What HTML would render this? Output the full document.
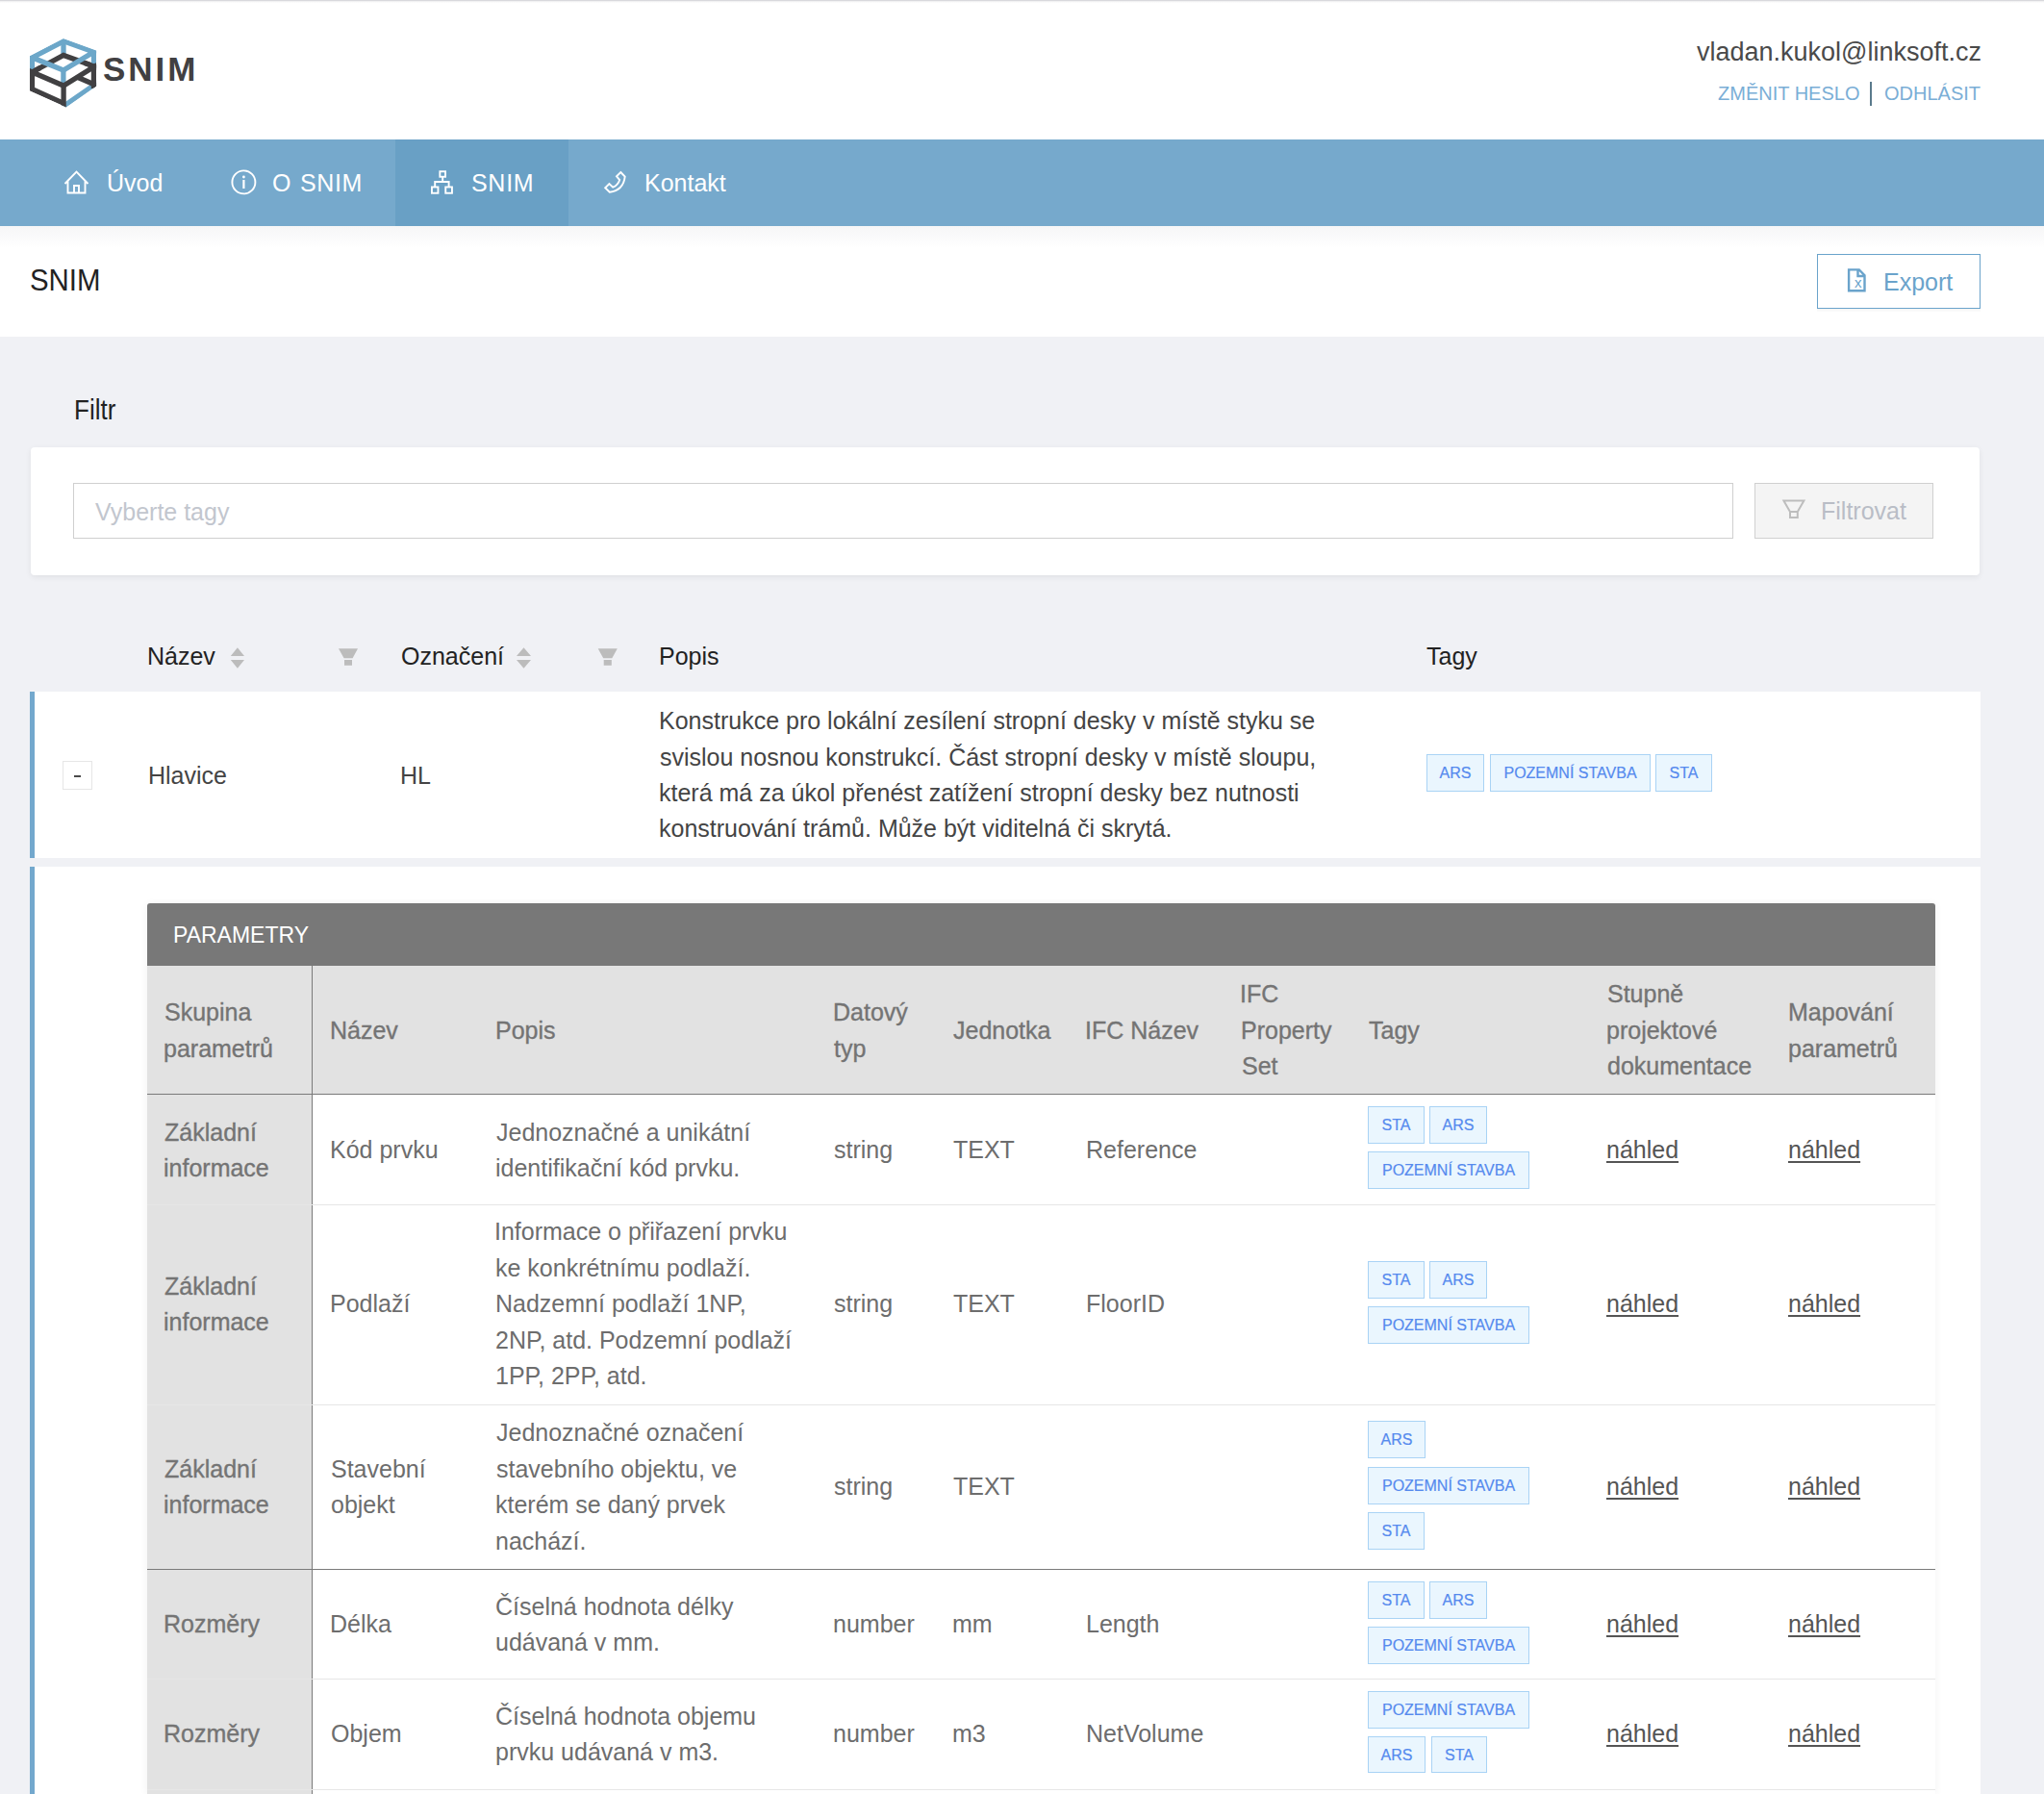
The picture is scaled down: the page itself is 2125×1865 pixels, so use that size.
<!DOCTYPE html>
<html><head><meta charset="utf-8"><style>
*{box-sizing:border-box;margin:0;padding:0}
html,body{width:2125px;height:1865px;overflow:hidden}
body{background:#f0f1f5;font-family:"Liberation Sans",sans-serif;position:relative}
.t{position:absolute;white-space:nowrap}
.r{position:absolute}
svg{position:absolute;overflow:visible}
.tag{position:absolute;background:#eaf6fe;border:1px solid #a9d3f5;color:#558aee;font-size:16px;-webkit-text-stroke:0.2px #558aee;display:flex;align-items:center;justify-content:center;white-space:nowrap;padding-top:1px}
</style></head><body>
<div class="r" style="left:0px;top:0px;width:2125px;height:145px;background:#fff"></div>
<div class="r" style="left:0px;top:0px;width:2125px;height:1px;background:#d8d8dc"></div>
<div class="r" style="left:0px;top:1px;width:2125px;height:2px;background:linear-gradient(#ececee,#fff)"></div>
<svg style="left:0;top:0" width="220" height="130" viewBox="0 0 220 130">
<defs><clipPath id="lc"><path d="M31,58.1 L65.9,40 L100.1,52.4 L100.1,89.4 L68.9,111.6 L31,94.6 Z"/></clipPath></defs>
<g clip-path="url(#lc)" fill="none" stroke-linejoin="miter" stroke-miterlimit="10">
<path d="M66,42.8 L66,58" stroke="#6ca7c9" stroke-width="5.3"/>
<path d="M33.45,75.04 L66,57.46 L97.45,68.8" stroke="#414042" stroke-width="5.3"/>
<g stroke="#6ca7c9" stroke-width="5.3">
<path d="M33.45,59.8 L66.1,42.8 L97.5,54 L65.9,73 Z"/>
<path d="M33.45,59.8 L33.45,76 M97.5,54 L97.5,70 M65.9,73 L65.9,89"/>
<path d="M104,84.1 L64,111.9"/>
</g>
<g stroke="#414042" stroke-width="5.3">
<path d="M88,65.6 L102,70.6 M29,77.2 L42,70.4"/>
<path d="M65.9,89 L33.45,75.04 L33.45,92.66 L66.1,107.4"/>
<path d="M65.9,89.2 L91.6,73.3 L101,67.5"/>
<path d="M97.45,68 L97.45,92"/>
<path d="M80.5,80.2 L102,89.6"/>
<path d="M66.1,88 L66.1,113"/>
</g>
</g></svg>
<div class="t" style="left:107px;top:54px;font-size:35px;line-height:35px;font-weight:bold;color:#414042;letter-spacing:3px">SNIM</div>
<div class="t" style="right:65px;top:41px;font-size:27px;line-height:27px;color:#4a4a4a">vladan.kukol@linksoft.cz</div>
<div class="t" style="left:1786px;top:87px;font-size:20px;line-height:20px;color:#7aaed6;">ZMĚNIT HESLO</div>
<div class="r" style="left:1944px;top:85px;width:2px;height:25px;background:#5a7a8c"></div>
<div class="t" style="left:1959px;top:87px;font-size:20px;line-height:20px;color:#7aaed6;">ODHLÁSIT</div>
<div class="r" style="left:0px;top:145px;width:2125px;height:90px;background:#76a9cc"></div>
<div class="r" style="left:411px;top:145px;width:180px;height:90px;background:#69a0c5"></div>
<svg style="left:0;top:0" width="700" height="240">
<g fill="none" stroke="#fff" stroke-width="1.9" stroke-linejoin="miter">
<path d="M67.5,191 L79.5,178.5 L91.5,191 M70.5,188.5 L70.5,200.5 L88.5,200.5 L88.5,188.5 M77,200.5 L77,193 L82,193 L82,200.5"/>
<circle cx="253.4" cy="189.4" r="12"/>
<path d="M253.4,187 L253.4,196" stroke-width="2.2"/>
<rect x="457.35" y="178.25" width="5.7" height="5.5"/>
<path d="M460.2,184 L460.2,189 M452.2,194.5 L452.2,189 L466.6,189 L466.6,194.5"/>
<rect x="448.95" y="194.45" width="6.5" height="6.3"/>
<rect x="463.25" y="194.45" width="6.7" height="6.3"/>
<path d="M645.3,179 L649.7,183.6 Q648,198 633.75,199.7 L629.2,195.3 L633.4,191.1 L637.2,194.7 Q642.5,192.5 644.2,187 L641,183.4 Z"/>
</g>
<circle cx="253.4" cy="184" r="1.4" fill="#fff"/>
</svg>
<div class="t" style="left:111px;top:178px;font-size:25px;line-height:25px;color:#fff;">Úvod</div>
<div class="t" style="left:283px;top:178px;font-size:25px;line-height:25px;color:#fff;letter-spacing:0.6px;word-spacing:1.5px">O SNIM</div>
<div class="t" style="left:490px;top:178px;font-size:25px;line-height:25px;color:#fff;letter-spacing:0.7px">SNIM</div>
<div class="t" style="left:670px;top:178px;font-size:25px;line-height:25px;color:#fff;">Kontakt</div>
<div class="r" style="left:0px;top:235px;width:2125px;height:115px;background:#fff"></div>
<div class="r" style="left:0px;top:235px;width:2125px;height:23px;background:linear-gradient(#f6f6f7,#fff)"></div>
<div class="t" style="left:31px;top:277px;font-size:30px;line-height:30px;color:#222;transform:scale(0.98,1.07);transform-origin:0 25px">SNIM</div>
<div class="r" style="left:1889px;top:320px;width:170px;height:5px;background:linear-gradient(rgba(0,0,0,.06),rgba(0,0,0,0))"></div>
<div class="r" style="left:1889px;top:264px;width:170px;height:57px;background:#fff;border:1.5px solid #6aa3cb"></div>
<svg style="left:0;top:0" width="2125" height="400">
<g fill="none" stroke="#6aa3cb" stroke-width="2.2">
<path d="M1922.1,280.4 L1932.8,280.4 L1938.5,286.2 L1938.5,302.3 L1922.1,302.3 Z M1931.5,280.4 L1931.5,287 L1938.5,287" stroke-width="2.4"/>
</g></svg>
<div class="t" style="left:1928px;top:286px;font-size:15px;line-height:15px;color:#6aa3cb;">x</div>
<div class="t" style="left:1958px;top:281px;font-size:25px;line-height:25px;color:#6aa3cb;">Export</div>
<div class="t" style="left:77px;top:414px;font-size:26px;line-height:26px;color:#222;transform:scale(1,1.12);transform-origin:0 22px">Filtr</div>
<div class="r" style="left:32px;top:465px;width:2026px;height:133px;background:#fff;border-radius:4px;box-shadow:0 2px 6px rgba(0,0,0,.07)"></div>
<div class="r" style="left:76px;top:502px;width:1726px;height:58px;background:#fff;border:1px solid #cfcfcf"></div>
<div class="t" style="left:99px;top:520px;font-size:25px;line-height:25px;color:#c2c6ce;">Vyberte tagy</div>
<div class="r" style="left:1824px;top:502px;width:186px;height:58px;background:#f4f4f4;border:1px solid #d0d0d0"></div>
<svg style="left:0;top:0" width="2125" height="600">
<path d="M1854.4,520.5 L1875.4,520.5 L1868.8,532 L1861,532 Z M1861,532 L1861,538 L1868.8,538 L1868.8,532" fill="none" stroke="#bdbdbd" stroke-width="2"/>
</svg>
<div class="t" style="left:1893px;top:519px;font-size:25px;line-height:25px;color:#b9bdc6;">Filtrovat</div>
<div class="t" style="left:153px;top:670px;font-size:25px;line-height:25px;color:#222;">Název</div>
<div class="t" style="left:417px;top:670px;font-size:25px;line-height:25px;color:#222;">Označení</div>
<div class="t" style="left:685px;top:670px;font-size:25px;line-height:25px;color:#222;">Popis</div>
<div class="t" style="left:1483px;top:670px;font-size:25px;line-height:25px;color:#222;">Tagy</div>
<svg style="left:0;top:0" width="2125" height="720"><g fill="#bcbcbc">
<path d="M239.8,682 L246.9,673.2 L254,682 Z M239.8,686 L254,686 L246.9,694.7 Z"/>
<path d="M537,682 L544.5,673.2 L552,682 Z M537,686 L552,686 L544.5,694.7 Z"/>
<path d="M352,674.2 L372,674.2 L366.6,684.2 L357.6,684.2 Z M358,686.1 L366,686.1 L366,691.8 L358,691.8 Z"/>
<path d="M621.7,674.2 L641.8,674.2 L636.3,684.2 L627.2,684.2 Z M627.7,686.1 L635.8,686.1 L635.8,691.8 L627.7,691.8 Z"/>
</g></svg>
<div class="r" style="left:31px;top:719px;width:2028px;height:173px;background:#fff"></div>
<div class="r" style="left:31px;top:719px;width:5px;height:173px;background:#73a8cd"></div>
<div class="r" style="left:65px;top:791px;width:31px;height:30px;background:#fff;border:1px solid #e6e6e6"></div>
<div class="r" style="left:77px;top:806px;width:7px;height:2px;background:#4a4a4a"></div>
<div class="t" style="left:154px;top:794px;font-size:25px;line-height:25px;color:#444;">Hlavice</div>
<div class="t" style="left:416px;top:794px;font-size:25px;line-height:25px;color:#444;">HL</div>
<div class="t" style="left:685px;top:737px;font-size:25px;line-height:25px;color:#444;">Konstrukce pro lokální zesílení stropní desky v místě styku se</div>
<div class="t" style="left:686px;top:775px;font-size:25px;line-height:25px;color:#444;">svislou nosnou konstrukcí. Část stropní desky v místě sloupu,</div>
<div class="t" style="left:685px;top:812px;font-size:25px;line-height:25px;color:#444;">která má za úkol přenést zatížení stropní desky bez nutnosti</div>
<div class="t" style="left:685px;top:849px;font-size:25px;line-height:25px;color:#444;">konstruování trámů. Může být viditelná či skrytá.</div>
<div class="tag" style="left:1483px;top:784px;width:60px;height:39px">ARS</div>
<div class="tag" style="left:1549px;top:784px;width:167px;height:39px">POZEMNÍ STAVBA</div>
<div class="tag" style="left:1721px;top:784px;width:59px;height:39px">STA</div>
<div class="r" style="left:31px;top:901px;width:2028px;height:964px;background:#fff"></div>
<div class="r" style="left:31px;top:901px;width:5px;height:964px;background:#73a8cd"></div>
<div class="r" style="left:153px;top:939px;width:1859px;height:926px;background:#fff;box-shadow:0 1px 8px rgba(0,0,0,.06);border-radius:3px 3px 0 0"></div>
<div class="r" style="left:153px;top:939px;width:1859px;height:65px;background:#787878;border-radius:3px 3px 0 0"></div>
<div class="t" style="left:180px;top:961px;font-size:23px;line-height:23px;color:#fff;">PARAMETRY</div>
<div class="r" style="left:153px;top:1004px;width:1859px;height:133px;background:#e2e2e2"></div>
<div class="r" style="left:153px;top:1137px;width:1859px;height:1px;background:#7a7a7a"></div>
<div class="r" style="left:153px;top:1138px;width:171px;height:727px;background:#e2e2e2"></div>
<div class="r" style="left:324px;top:1004px;width:1px;height:861px;background:#7a7a7a"></div>
<div class="r" style="left:153px;top:1252px;width:1859px;height:1px;background:#e6e6e6"></div>
<div class="r" style="left:153px;top:1460px;width:1859px;height:1px;background:#e6e6e6"></div>
<div class="r" style="left:153px;top:1631px;width:1859px;height:1px;background:#7a7a7a"></div>
<div class="r" style="left:153px;top:1745px;width:1859px;height:1px;background:#e6e6e6"></div>
<div class="r" style="left:153px;top:1860px;width:1859px;height:1px;background:#e6e6e6"></div>
<div class="t" style="left:171px;top:1040px;font-size:25px;line-height:25px;color:#747474;-webkit-text-stroke:0.35px #747474">Skupina</div>
<div class="t" style="left:170px;top:1078px;font-size:25px;line-height:25px;color:#747474;-webkit-text-stroke:0.35px #747474">parametrů</div>
<div class="t" style="left:343px;top:1059px;font-size:25px;line-height:25px;color:#747474;-webkit-text-stroke:0.35px #747474">Název</div>
<div class="t" style="left:515px;top:1059px;font-size:25px;line-height:25px;color:#747474;-webkit-text-stroke:0.35px #747474">Popis</div>
<div class="t" style="left:866px;top:1040px;font-size:25px;line-height:25px;color:#747474;-webkit-text-stroke:0.35px #747474">Datový</div>
<div class="t" style="left:867px;top:1078px;font-size:25px;line-height:25px;color:#747474;-webkit-text-stroke:0.35px #747474">typ</div>
<div class="t" style="left:991px;top:1059px;font-size:25px;line-height:25px;color:#747474;-webkit-text-stroke:0.35px #747474">Jednotka</div>
<div class="t" style="left:1128px;top:1059px;font-size:25px;line-height:25px;color:#747474;-webkit-text-stroke:0.35px #747474">IFC Název</div>
<div class="t" style="left:1289px;top:1021px;font-size:25px;line-height:25px;color:#747474;-webkit-text-stroke:0.35px #747474">IFC</div>
<div class="t" style="left:1290px;top:1059px;font-size:25px;line-height:25px;color:#747474;-webkit-text-stroke:0.35px #747474">Property</div>
<div class="t" style="left:1291px;top:1096px;font-size:25px;line-height:25px;color:#747474;-webkit-text-stroke:0.35px #747474">Set</div>
<div class="t" style="left:1423px;top:1059px;font-size:25px;line-height:25px;color:#747474;-webkit-text-stroke:0.35px #747474">Tagy</div>
<div class="t" style="left:1671px;top:1021px;font-size:25px;line-height:25px;color:#747474;-webkit-text-stroke:0.35px #747474">Stupně</div>
<div class="t" style="left:1670px;top:1059px;font-size:25px;line-height:25px;color:#747474;-webkit-text-stroke:0.35px #747474">projektové</div>
<div class="t" style="left:1671px;top:1096px;font-size:25px;line-height:25px;color:#747474;-webkit-text-stroke:0.35px #747474">dokumentace</div>
<div class="t" style="left:1859px;top:1040px;font-size:25px;line-height:25px;color:#747474;-webkit-text-stroke:0.35px #747474">Mapování</div>
<div class="t" style="left:1859px;top:1078px;font-size:25px;line-height:25px;color:#747474;-webkit-text-stroke:0.35px #747474">parametrů</div>
<div class="t" style="left:171px;top:1165px;font-size:25px;line-height:25px;color:#747474;-webkit-text-stroke:0.35px #747474">Základní</div>
<div class="t" style="left:170px;top:1202px;font-size:25px;line-height:25px;color:#747474;-webkit-text-stroke:0.35px #747474">informace</div>
<div class="t" style="left:343px;top:1183px;font-size:25px;line-height:25px;color:#6d6d6d;">Kód prvku</div>
<div class="t" style="left:516px;top:1165px;font-size:25px;line-height:25px;color:#6d6d6d;">Jednoznačné a unikátní</div>
<div class="t" style="left:515px;top:1202px;font-size:25px;line-height:25px;color:#6d6d6d;">identifikační kód prvku.</div>
<div class="t" style="left:867px;top:1183px;font-size:25px;line-height:25px;color:#6d6d6d;">string</div>
<div class="t" style="left:991px;top:1183px;font-size:25px;line-height:25px;color:#6d6d6d;">TEXT</div>
<div class="t" style="left:1129px;top:1183px;font-size:25px;line-height:25px;color:#6d6d6d;">Reference</div>
<div class="tag" style="left:1422px;top:1150px;width:59px;height:39px">STA</div>
<div class="tag" style="left:1486px;top:1150px;width:60px;height:39px">ARS</div>
<div class="tag" style="left:1422px;top:1197px;width:168px;height:39px">POZEMNÍ STAVBA</div>
<div class="t" style="left:1670px;top:1183px;font-size:25px;line-height:25px;color:#555;text-decoration:underline;text-underline-offset:3px">náhled</div>
<div class="t" style="left:1859px;top:1183px;font-size:25px;line-height:25px;color:#555;text-decoration:underline;text-underline-offset:3px">náhled</div>
<div class="t" style="left:171px;top:1325px;font-size:25px;line-height:25px;color:#747474;-webkit-text-stroke:0.35px #747474">Základní</div>
<div class="t" style="left:170px;top:1362px;font-size:25px;line-height:25px;color:#747474;-webkit-text-stroke:0.35px #747474">informace</div>
<div class="t" style="left:343px;top:1343px;font-size:25px;line-height:25px;color:#6d6d6d;">Podlaží</div>
<div class="t" style="left:514px;top:1268px;font-size:25px;line-height:25px;color:#6d6d6d;">Informace o přiřazení prvku</div>
<div class="t" style="left:515px;top:1306px;font-size:25px;line-height:25px;color:#6d6d6d;">ke konkrétnímu podlaží.</div>
<div class="t" style="left:515px;top:1343px;font-size:25px;line-height:25px;color:#6d6d6d;">Nadzemní podlaží 1NP,</div>
<div class="t" style="left:515px;top:1381px;font-size:25px;line-height:25px;color:#6d6d6d;">2NP, atd. Podzemní podlaží</div>
<div class="t" style="left:515px;top:1418px;font-size:25px;line-height:25px;color:#6d6d6d;">1PP, 2PP, atd.</div>
<div class="t" style="left:867px;top:1343px;font-size:25px;line-height:25px;color:#6d6d6d;">string</div>
<div class="t" style="left:991px;top:1343px;font-size:25px;line-height:25px;color:#6d6d6d;">TEXT</div>
<div class="t" style="left:1129px;top:1343px;font-size:25px;line-height:25px;color:#6d6d6d;">FloorID</div>
<div class="tag" style="left:1422px;top:1311px;width:59px;height:39px">STA</div>
<div class="tag" style="left:1486px;top:1311px;width:60px;height:39px">ARS</div>
<div class="tag" style="left:1422px;top:1358px;width:168px;height:39px">POZEMNÍ STAVBA</div>
<div class="t" style="left:1670px;top:1343px;font-size:25px;line-height:25px;color:#555;text-decoration:underline;text-underline-offset:3px">náhled</div>
<div class="t" style="left:1859px;top:1343px;font-size:25px;line-height:25px;color:#555;text-decoration:underline;text-underline-offset:3px">náhled</div>
<div class="t" style="left:171px;top:1515px;font-size:25px;line-height:25px;color:#747474;-webkit-text-stroke:0.35px #747474">Základní</div>
<div class="t" style="left:170px;top:1552px;font-size:25px;line-height:25px;color:#747474;-webkit-text-stroke:0.35px #747474">informace</div>
<div class="t" style="left:344px;top:1515px;font-size:25px;line-height:25px;color:#6d6d6d;">Stavební</div>
<div class="t" style="left:344px;top:1552px;font-size:25px;line-height:25px;color:#6d6d6d;">objekt</div>
<div class="t" style="left:516px;top:1477px;font-size:25px;line-height:25px;color:#6d6d6d;">Jednoznačné označení</div>
<div class="t" style="left:516px;top:1515px;font-size:25px;line-height:25px;color:#6d6d6d;">stavebního objektu, ve</div>
<div class="t" style="left:515px;top:1552px;font-size:25px;line-height:25px;color:#6d6d6d;">kterém se daný prvek</div>
<div class="t" style="left:515px;top:1590px;font-size:25px;line-height:25px;color:#6d6d6d;">nachází.</div>
<div class="t" style="left:867px;top:1533px;font-size:25px;line-height:25px;color:#6d6d6d;">string</div>
<div class="t" style="left:991px;top:1533px;font-size:25px;line-height:25px;color:#6d6d6d;">TEXT</div>
<div class="tag" style="left:1422px;top:1477px;width:60px;height:39px">ARS</div>
<div class="tag" style="left:1422px;top:1525px;width:168px;height:39px">POZEMNÍ STAVBA</div>
<div class="tag" style="left:1422px;top:1572px;width:59px;height:39px">STA</div>
<div class="t" style="left:1670px;top:1533px;font-size:25px;line-height:25px;color:#555;text-decoration:underline;text-underline-offset:3px">náhled</div>
<div class="t" style="left:1859px;top:1533px;font-size:25px;line-height:25px;color:#555;text-decoration:underline;text-underline-offset:3px">náhled</div>
<div class="t" style="left:170px;top:1676px;font-size:25px;line-height:25px;color:#747474;-webkit-text-stroke:0.35px #747474">Rozměry</div>
<div class="t" style="left:343px;top:1676px;font-size:25px;line-height:25px;color:#6d6d6d;">Délka</div>
<div class="t" style="left:515px;top:1658px;font-size:25px;line-height:25px;color:#6d6d6d;">Číselná hodnota délky</div>
<div class="t" style="left:515px;top:1695px;font-size:25px;line-height:25px;color:#6d6d6d;">udávaná v mm.</div>
<div class="t" style="left:866px;top:1676px;font-size:25px;line-height:25px;color:#6d6d6d;">number</div>
<div class="t" style="left:990px;top:1676px;font-size:25px;line-height:25px;color:#6d6d6d;">mm</div>
<div class="t" style="left:1129px;top:1676px;font-size:25px;line-height:25px;color:#6d6d6d;">Length</div>
<div class="tag" style="left:1422px;top:1644px;width:59px;height:39px">STA</div>
<div class="tag" style="left:1486px;top:1644px;width:60px;height:39px">ARS</div>
<div class="tag" style="left:1422px;top:1691px;width:168px;height:39px">POZEMNÍ STAVBA</div>
<div class="t" style="left:1670px;top:1676px;font-size:25px;line-height:25px;color:#555;text-decoration:underline;text-underline-offset:3px">náhled</div>
<div class="t" style="left:1859px;top:1676px;font-size:25px;line-height:25px;color:#555;text-decoration:underline;text-underline-offset:3px">náhled</div>
<div class="t" style="left:170px;top:1790px;font-size:25px;line-height:25px;color:#747474;-webkit-text-stroke:0.35px #747474">Rozměry</div>
<div class="t" style="left:344px;top:1790px;font-size:25px;line-height:25px;color:#6d6d6d;">Objem</div>
<div class="t" style="left:515px;top:1772px;font-size:25px;line-height:25px;color:#6d6d6d;">Číselná hodnota objemu</div>
<div class="t" style="left:515px;top:1809px;font-size:25px;line-height:25px;color:#6d6d6d;">prvku udávaná v m3.</div>
<div class="t" style="left:866px;top:1790px;font-size:25px;line-height:25px;color:#6d6d6d;">number</div>
<div class="t" style="left:990px;top:1790px;font-size:25px;line-height:25px;color:#6d6d6d;">m3</div>
<div class="t" style="left:1129px;top:1790px;font-size:25px;line-height:25px;color:#6d6d6d;">NetVolume</div>
<div class="tag" style="left:1422px;top:1758px;width:168px;height:39px">POZEMNÍ STAVBA</div>
<div class="tag" style="left:1422px;top:1805px;width:60px;height:38px">ARS</div>
<div class="tag" style="left:1488px;top:1805px;width:58px;height:38px">STA</div>
<div class="t" style="left:1670px;top:1790px;font-size:25px;line-height:25px;color:#555;text-decoration:underline;text-underline-offset:3px">náhled</div>
<div class="t" style="left:1859px;top:1790px;font-size:25px;line-height:25px;color:#555;text-decoration:underline;text-underline-offset:3px">náhled</div>
</body></html>
